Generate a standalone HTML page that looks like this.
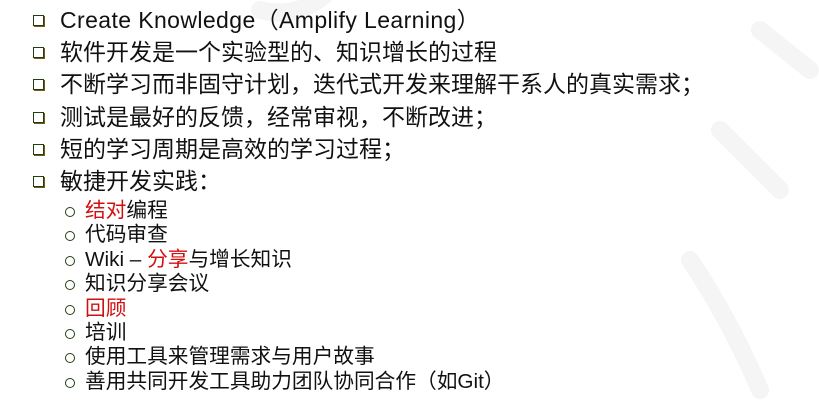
<!DOCTYPE html>
<html><head><meta charset="utf-8"><style>
body{margin:0;width:819px;height:415px;background:#fff;overflow:hidden;position:relative;font-family:"Liberation Sans","Noto Sans CJK SC",sans-serif;color:#111}
.m{position:absolute;left:60px;font-size:23px;line-height:32px;height:32px;white-space:nowrap}
.m:before{content:"";position:absolute;left:-27px;top:11px;width:9px;height:9px;border:1.5px solid #233f12;box-shadow:1px 1px 0 #7a5a10}
.s{position:absolute;left:85px;font-size:20.7px;line-height:24px;height:24px;white-space:nowrap}
.s:before{content:"";position:absolute;left:-20px;top:8px;width:8px;height:8px;border:1.6px solid #233f12;border-radius:50%}
.r{color:#d01010}
</style></head><body>
<svg style="position:absolute;left:0;top:0" width="819" height="415"><g fill="none" stroke="#f5f5f5" stroke-width="18" stroke-linecap="round"><path d="M330 -10 Q300 20 260 10"/><path d="M760 30 L810 70"/><path d="M720 130 L780 190"/><path d="M690 260 Q730 320 760 390"/></g></svg>
<div class="m" style="top:4px;letter-spacing:0.4px">Create Knowledge（Amplify Learning）</div>
<div class="m" style="top:36px">软件开发是一个实验型的、知识增长的过程</div>
<div class="m" style="top:68px">不断学习而非固守计划，迭代式开发来理解干系人的真实需求；</div>
<div class="m" style="top:101px">测试是最好的反馈，经常审视，不断改进；</div>
<div class="m" style="top:133px">短的学习周期是高效的学习过程；</div>
<div class="m" style="top:165px">敏捷开发实践：</div>
<div class="s" style="top:199px"><span class="r">结对</span>编程</div>
<div class="s" style="top:223px">代码审查</div>
<div class="s" style="top:248px">Wiki – <span class="r">分享</span>与增长知识</div>
<div class="s" style="top:272px">知识分享会议</div>
<div class="s" style="top:297px"><span class="r">回顾</span></div>
<div class="s" style="top:321px">培训</div>
<div class="s" style="top:345px">使用工具来管理需求与用户故事</div>
<div class="s" style="top:370px">善用共同开发工具助力团队协同合作（如Git）</div>
</body></html>
